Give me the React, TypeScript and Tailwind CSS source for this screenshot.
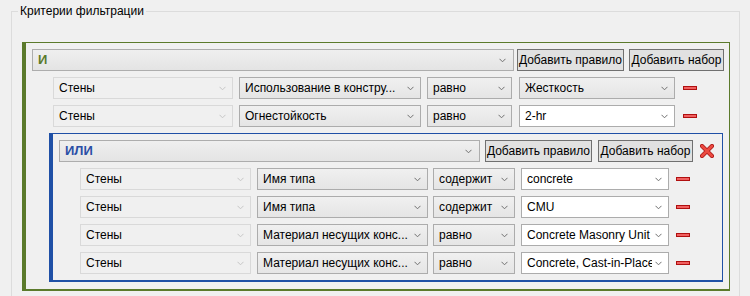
import React from 'react'

type Kind = 'disabled' | 'plain' | 'edit'

function Chevron({ light }: { light?: boolean }) {
  return (
    <svg width="7" height="5" viewBox="0 0 7 5" className="shrink-0">
      <polyline
        points="0.5,0.8 3.5,3.8 6.5,0.8"
        fill="none"
        stroke={light ? '#c6c6c6' : '#707070'}
        strokeWidth="1"
      />
    </svg>
  )
}

function Combo({ text, w, kind }: { text: string; w: string; kind: Kind }) {
  const look =
    kind === 'disabled'
      ? 'border-[#d9d9d9] bg-[#f0f0f0]'
      : kind === 'edit'
        ? 'border-[#acacac] bg-white'
        : 'border-[#acacac] bg-gradient-to-b from-[#f0f0f0] to-[#e5e5e5]'
  return (
    <div className={`flex h-[22px] shrink-0 items-center gap-[3px] border pl-[5px] pr-[6px] ${look} ${w}`}>
      <span className="flex-1 overflow-hidden whitespace-nowrap leading-[16px] text-black">{text}</span>
      <Chevron light={kind === 'disabled'} />
    </div>
  )
}

function Btn({ children, w }: { children: React.ReactNode; w: string }) {
  return (
    <div className={`flex h-[22px] shrink-0 items-center justify-center whitespace-nowrap border border-[#707070] bg-[#e1e1e1] leading-[16px] text-black ${w}`}>
      {children}
    </div>
  )
}

function Minus() {
  return <div className="h-[4px] w-[14px] shrink-0 border border-[#b01010] bg-[#f06060]" />
}

function RedX() {
  return (
    <svg width="14" height="14" viewBox="0 0 14 14" className="shrink-0">
      <path d="M2 2 L12 12 M12 2 L2 12" stroke="#a81818" strokeWidth="4.2" strokeLinecap="round" />
      <path d="M2 2 L12 12 M12 2 L2 12" stroke="#ec4a40" strokeWidth="2.6" strokeLinecap="round" />
    </svg>
  )
}

function Header({ label, color, comboW }: { label: string; color: string; comboW: string }) {
  return (
    <div className={`flex h-[22px] shrink-0 items-center border border-[#adadad] bg-gradient-to-b from-[#efefef] to-[#e4e4e4] pl-[5px] pr-[7px] ${comboW}`}>
      <span className={`flex-1 text-[13px] font-bold leading-[16px] ${color}`}>{label}</span>
      <Chevron />
    </div>
  )
}

const greenRows = [
  ['Использование в констру...', 'равно', 'Жесткость', 'plain'],
  ['Огнестойкость', 'равно', '2-hr', 'edit'],
] as const

const blueRows = [
  ['Имя типа', 'содержит', 'concrete'],
  ['Имя типа', 'содержит', 'CMU'],
  ['Материал несущих конс...', 'равно', 'Concrete Masonry Unit'],
  ['Материал несущих конс...', 'равно', 'Concrete, Cast-in-Place'],
]

export default function App() {
  return (
    <div
      className="h-[296px] w-[750px] overflow-hidden bg-[#f0f0f0] pt-[4px] text-[12px] leading-none text-black"
      style={{ fontFamily: '"Liberation Sans", Arial, sans-serif' }}
    >
      <fieldset className="ml-[11px] w-[729px] border border-[#dcdcdc] pb-[30px]">
        <legend className="ml-[6px] px-[2px] leading-[14px]">Критерии фильтрации</legend>

        <div className="ml-[10px] mt-[24px] flex w-[708px] flex-col gap-[6px] border border-b-2 border-l-4 border-[#5b7a2b] pb-[7px] pl-[6px] pr-[4px] pt-[6px]">
          <div className="flex items-center">
            <Header label="И" color="text-[#5b7a2b]" comboW="w-[482px]" />
            <div className="ml-[3px]">
              <Btn w="w-[107px]">Добавить правило</Btn>
            </div>
            <div className="ml-[5px]">
              <Btn w="w-[95px]">Добавить набор</Btn>
            </div>
          </div>

          {greenRows.map(([param, op, value, kind]) => (
            <div key={param} className="ml-[21px] flex items-center">
              <Combo text="Стены" w="w-[180px]" kind="disabled" />
              <div className="ml-[6px]">
                <Combo text={param} w="w-[182px]" kind="plain" />
              </div>
              <div className="ml-[6px]">
                <Combo text={op} w="w-[85px]" kind="plain" />
              </div>
              <div className="ml-[7px]">
                <Combo text={value} w="w-[156px]" kind={kind} />
              </div>
              <div className="ml-[8px]">
                <Minus />
              </div>
            </div>
          ))}

          <div className="ml-[17px] flex w-[674px] flex-col gap-[6px] border border-b-2 border-l-4 border-[#1f50a6] pb-[6px] pl-[6px] pt-[6px]">
            <div className="flex items-center">
              <Header label="ИЛИ" color="text-[#2a4fa6]" comboW="w-[421px]" />
              <div className="ml-[5px]">
                <Btn w="w-[107px]">Добавить правило</Btn>
              </div>
              <div className="ml-[6px]">
                <Btn w="w-[95px]">Добавить набор</Btn>
              </div>
              <div className="ml-[7px]">
                <RedX />
              </div>
            </div>

            {blueRows.map(([param, op, value]) => (
              <div key={value} className="ml-[21px] flex items-center">
                <Combo text="Стены" w="w-[171px]" kind="disabled" />
                <div className="ml-[6px]">
                  <Combo text={param} w="w-[171px]" kind="plain" />
                </div>
                <div className="ml-[5px]">
                  <Combo text={op} w="w-[82px]" kind="plain" />
                </div>
                <div className="ml-[6px]">
                  <Combo text={value} w="w-[148px]" kind="edit" />
                </div>
                <div className="ml-[7px]">
                  <Minus />
                </div>
              </div>
            ))}
          </div>
        </div>
      </fieldset>
    </div>
  )
}
